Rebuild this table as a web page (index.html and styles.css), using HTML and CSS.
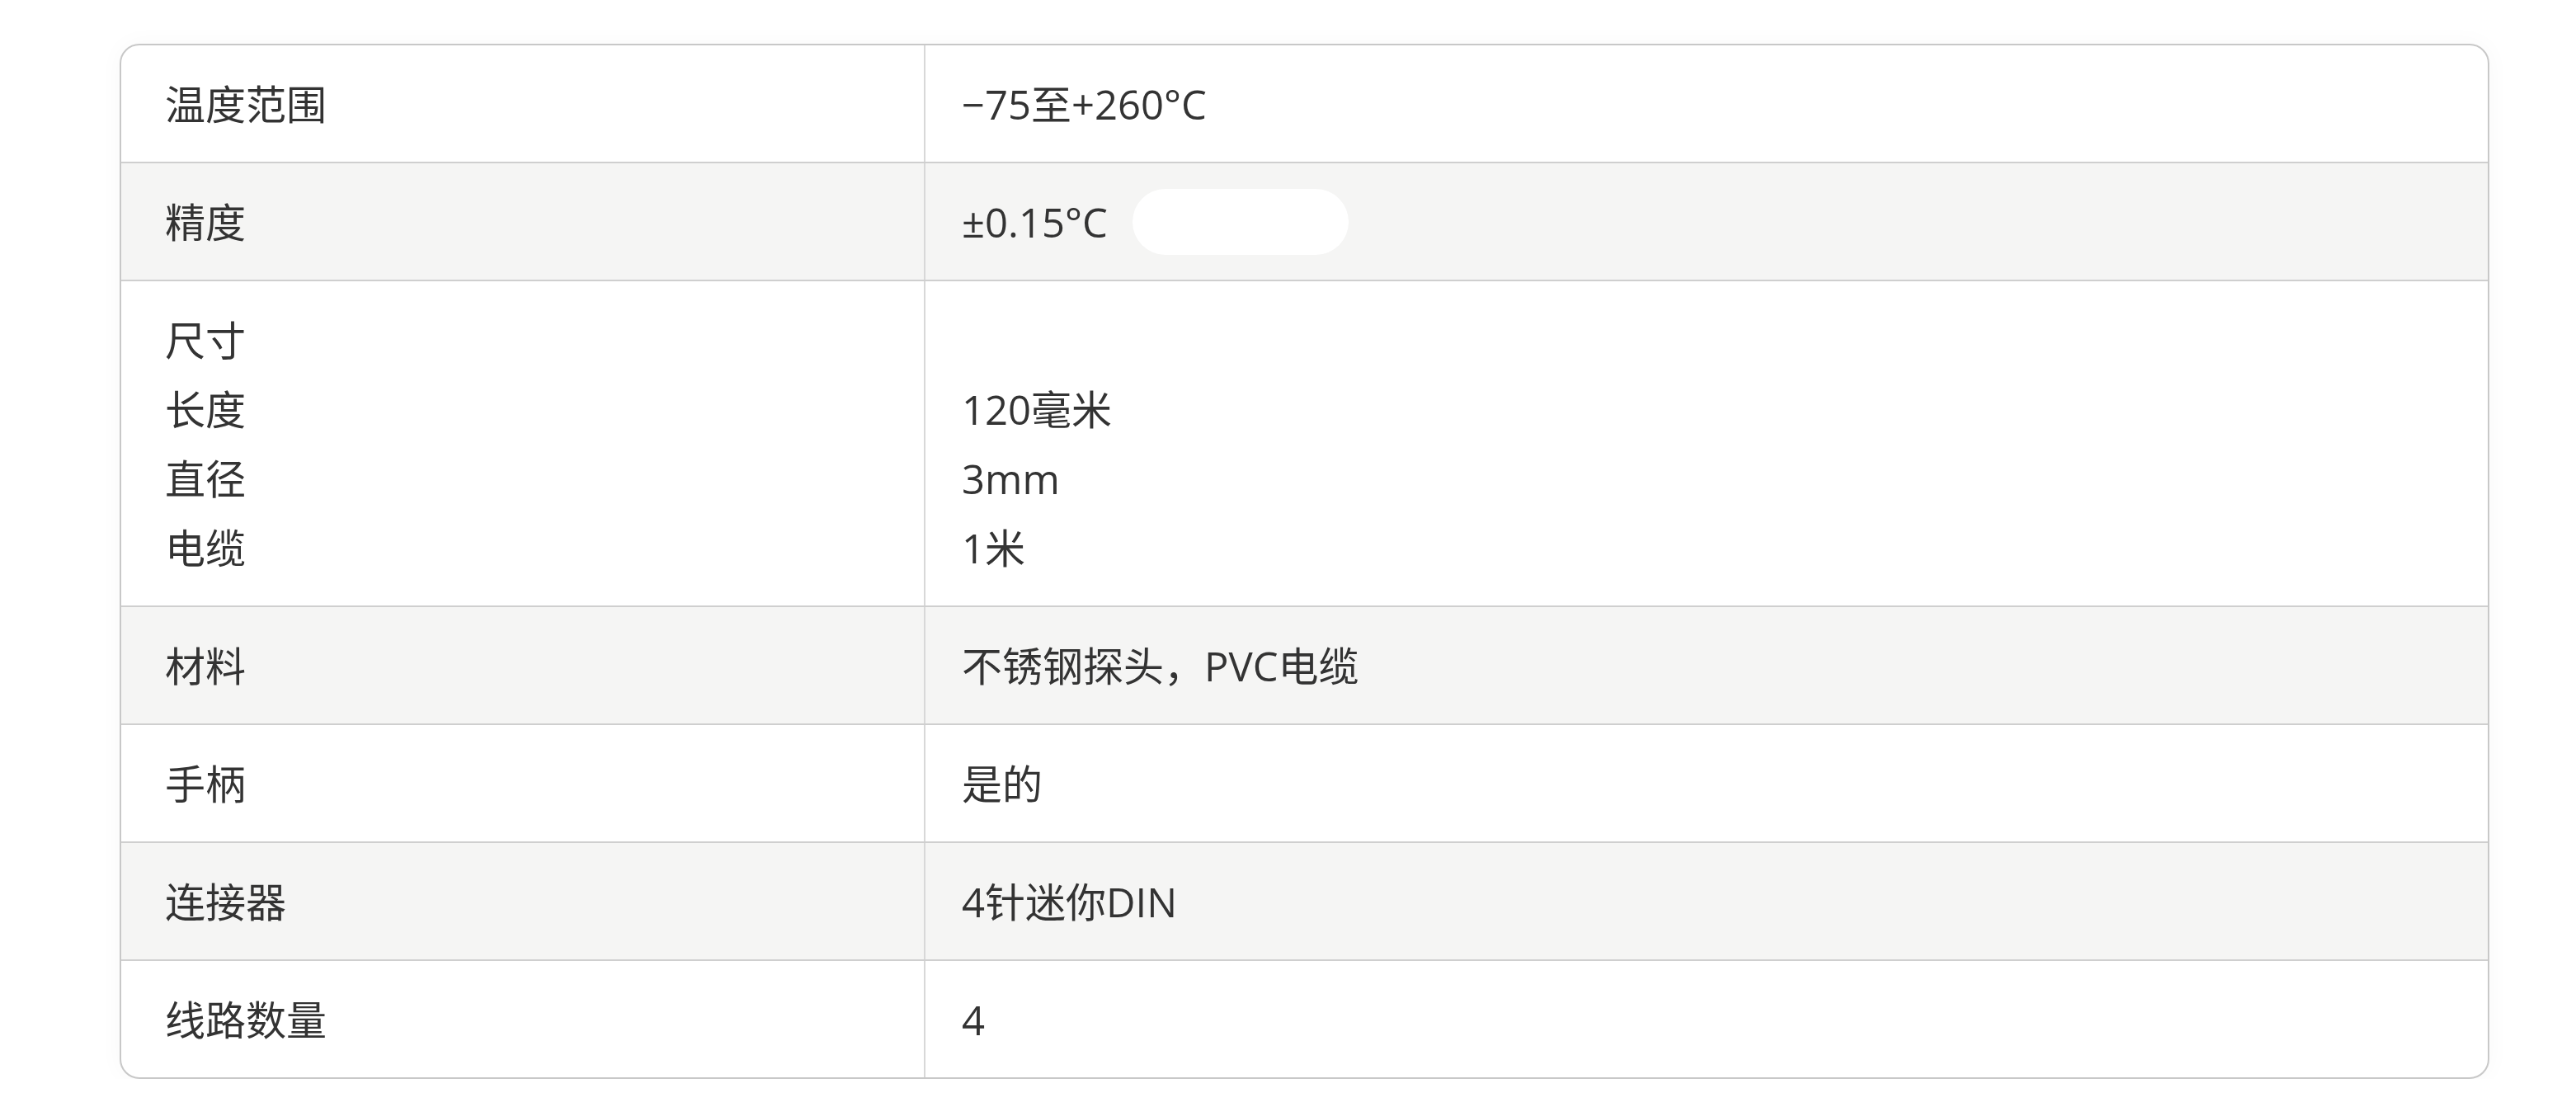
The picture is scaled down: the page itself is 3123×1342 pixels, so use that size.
FILE: index.html
```html
<!DOCTYPE html>
<html lang="zh-CN">
<head>
<meta charset="utf-8">
<title>规格</title>
<link rel="stylesheet" href="styles.css">
</head>
<body>
<div class="spec">
  <div class="row">
    <div class="cell label">温度范围</div>
    <div class="cell value">−75至+260°C</div>
  </div>
  <div class="row alt">
    <div class="cell label">精度</div>
    <div class="cell value inline"><span>±0.15°C</span><span class="blot"></span></div>
  </div>
  <div class="row">
    <div class="cell label">
      <div class="line">尺寸</div>
      <div class="line">长度</div>
      <div class="line">直径</div>
      <div class="line">电缆</div>
    </div>
    <div class="cell value">
      <div class="line">&nbsp;</div>
      <div class="line">120毫米</div>
      <div class="line">3mm</div>
      <div class="line">1米</div>
    </div>
  </div>
  <div class="row alt">
    <div class="cell label">材料</div>
    <div class="cell value">不锈钢探头，PVC电缆</div>
  </div>
  <div class="row">
    <div class="cell label">手柄</div>
    <div class="cell value">是的</div>
  </div>
  <div class="row alt">
    <div class="cell label">连接器</div>
    <div class="cell value">4针迷你DIN</div>
  </div>
  <div class="row">
    <div class="cell label">线路数量</div>
    <div class="cell value">4</div>
  </div>
</div>
</body>
</html>
```

FILE: styles.css
```css
html, body {
  margin: 0;
  padding: 0;
  background: #ffffff;
}
body {
  padding: 53px 0 0 145px;
  font-family: "Open Sans", "Noto Sans CJK SC", sans-serif;
  color: #333333;
}
.spec {
  box-sizing: border-box;
  width: 2873px;
  border: 2px solid #c8c8c8;
  border-radius: 24px;
  overflow: hidden;
  background: #ffffff;
  box-shadow: 0 0 30px rgba(0, 0, 0, 0.03);
}
.row {
  display: grid;
  grid-template-columns: 973px 1fr;
  border-top: 2px solid #cfcfcf;
}
.row:first-child {
  border-top: none;
}
.row.alt {
  background: #f5f5f4;
}
.cell {
  padding: 28.5px 0;
  font-size: 49px;
  line-height: 84px;
  height: 84px;
}
.cell:has(.line) {
  height: auto;
}
.label {
  padding-left: 53px;
}
.value {
  padding-left: 44px;
  border-left: 2px solid #d8d8d8;
}
.inline {
  display: flex;
  align-items: center;
}
.line {
  height: 84px;
}
.blot {
  width: 262px;
  height: 80px;
  margin-left: 30px;
  border-radius: 40px;
  background: #ffffff;
}
```
